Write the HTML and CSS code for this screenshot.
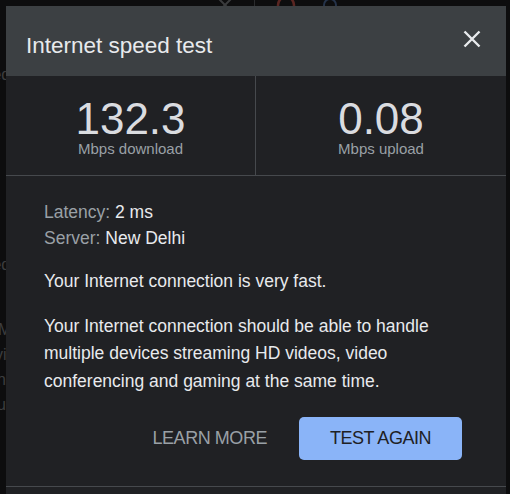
FILE: index.html
```html
<!DOCTYPE html>
<html lang="en">
<head>
<meta charset="utf-8">
<title>Internet speed test</title>
<link rel="stylesheet" href="styles.css">
</head>
<body>
<div class="backdrop" aria-hidden="true">
  <div class="bd-top">
    <svg class="bd-x" width="22" height="22" viewBox="0 0 22 22"><path d="M3 3L19 19M19 3L3 19" stroke="#3a3b3d" stroke-width="2" fill="none"/></svg>
    <span class="bd-sep"></span>
    <svg class="bd-ring" width="22" height="22" viewBox="0 0 22 22"><circle cx="11" cy="11" r="8" stroke="#5a2622" stroke-width="2.5" fill="none"/></svg>
    <svg class="bd-search" width="22" height="22" viewBox="0 0 22 22"><circle cx="9" cy="9" r="6" stroke="#25334a" stroke-width="2" fill="none"/><path d="M13 13L19 19" stroke="#25334a" stroke-width="2"/></svg>
  </div>
  <div class="bd-text">
    <p class="bd-l1">Speed</p>
    <p class="bd-l2">Speed</p>
    <p class="bd-l3">M</p>
    <p class="bd-l4">vi</p>
    <p class="bd-l5">n</p>
    <p class="bd-l6">u</p>
  </div>
</div>

<section class="dialog" role="dialog" aria-label="Internet speed test">
  <header class="dlg-header">
    <h1 class="dlg-title">Internet speed test</h1>
    <button class="close" aria-label="Close">
      <svg width="18" height="18" viewBox="0 0 18 18"><path d="M1.5 1.5L16.5 16.5M16.5 1.5L1.5 16.5" stroke="#e8eaed" stroke-width="2.4" fill="none"/></svg>
    </button>
  </header>

  <div class="stats">
    <div class="stat">
      <div class="stat-num">132.3</div>
      <div class="stat-label">Mbps download</div>
    </div>
    <div class="stat">
      <div class="stat-num">0.08</div>
      <div class="stat-label">Mbps upload</div>
    </div>
  </div>

  <div class="dlg-body">
    <div class="info">
      <div><span class="lbl">Latency:</span> 2 ms</div>
      <div><span class="lbl">Server:</span> New Delhi</div>
    </div>
    <p class="txt">Your Internet connection is very fast.</p>
    <p class="txt">Your Internet connection should be able to handle multiple devices streaming HD videos, video conferencing and gaming at the same time.</p>
    <div class="actions">
      <button class="btn-text">LEARN MORE</button>
      <button class="btn-primary">TEST AGAIN</button>
    </div>
  </div>
  <div class="dlg-footer"></div>
</section>
</body>
</html>
```

FILE: styles.css
```css
html, body {
  margin: 0;
  padding: 0;
}
body {
  background: #0d0d0e;
  font-family: "Liberation Sans", Arial, sans-serif;
  width: 510px;
  height: 494px;
  overflow: hidden;
  position: relative;
}

/* dimmed page underneath */
.backdrop {
  color: #3c3d3f;
}
.bd-top {
  height: 6px;
  overflow: hidden;
  display: flex;
  align-items: flex-end;
  padding-left: 214px;
}
.bd-top svg {
  flex: none;
}
.bd-x {
  margin-bottom: -10px;
}
.bd-sep {
  width: 1px;
  height: 6px;
  background: #2a2b2d;
  margin-left: 18px;
}
.bd-ring {
  margin-left: 20px;
  margin-bottom: -10px;
}
.bd-search {
  margin-left: 24px;
  margin-bottom: -12px;
}
.bd-text {
  margin-left: -36px;
  font-size: 16px;
  line-height: 25px;
}
.bd-text p {
  margin: 0;
}
.bd-l1 { margin-top: 56px !important; }
.bd-l2 { margin-top: 165px !important; }
.bd-l3 { margin-top: 40px !important; padding-left: 34px; }
.bd-l4 { padding-left: 31px; }
.bd-l5 { padding-left: 33px; }
.bd-l6 { padding-left: 33px; }

/* dialog */
.dialog {
  position: absolute;
  left: 6px;
  top: 6px;
  width: 500px;
  height: 500px;
  background: #202124;
  color: #e8eaed;
}
.dlg-header {
  height: 70px;
  background: #3c4043;
  display: flex;
  align-items: center;
  justify-content: space-between;
  padding: 0 25px 0 20px;
  box-sizing: border-box;
}
.dlg-title {
  margin: 10px 0 0;
  font-size: 22.5px;
  font-weight: 400;
  color: #e8eaed;
}
.close {
  background: none;
  border: 0;
  padding: 0;
  width: 18px;
  height: 18px;
  margin-bottom: 4px;
  display: flex;
}

.stats {
  display: grid;
  grid-template-columns: 249px 1fr;
  border-bottom: 1px solid #46494d;
}
.stat {
  text-align: center;
  padding: 22px 0 17px;
}
.stat + .stat {
  border-left: 1px solid #46494d;
}
.stat-num {
  font-size: 44px;
  line-height: 42px;
  color: #dadce0;
}
.stat-label {
  font-size: 15px;
  line-height: 18px;
  color: #9aa0a6;
}

.dlg-body {
  padding: 23px 44px 0 38px;
  font-size: 17.5px;
}
.info {
  line-height: 26px;
}
.lbl {
  color: #9aa0a6;
}
.txt {
  margin: 17px 0 0;
  line-height: 27.5px;
}
.actions {
  display: flex;
  justify-content: flex-end;
  align-items: center;
  gap: 16px;
  margin-top: 22px;
}
.actions button {
  font-family: "Liberation Sans", Arial, sans-serif;
  font-size: 18px;
  letter-spacing: -0.45px;
  height: 43px;
  border: 0;
  border-radius: 5px;
}
.btn-text {
  background: none;
  color: #9aa0a6;
  padding: 0 16px;
}
.btn-primary {
  background: #8ab4f8;
  color: #202124;
  padding: 0 30px;
  width: 163px;
}
.dlg-footer {
  margin-top: 26px;
  border-top: 1px solid #46494d;
}
```
